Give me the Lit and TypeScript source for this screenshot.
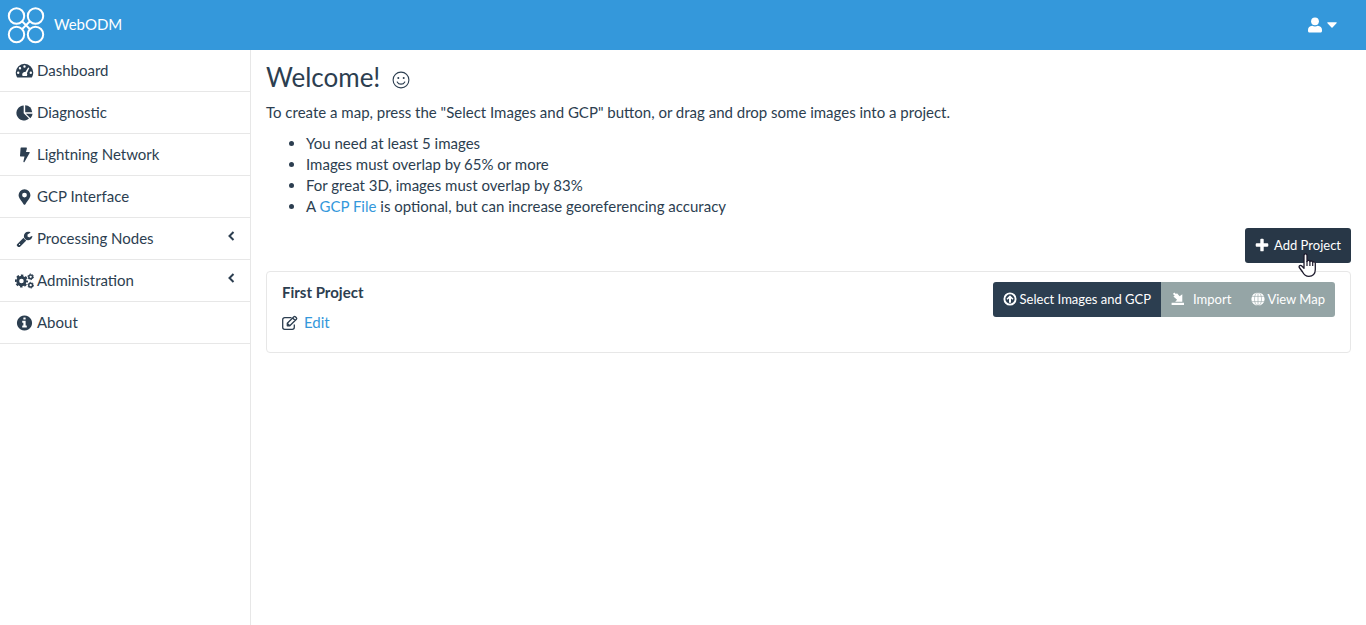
import { LitElement, html, svg, css, nothing } from "lit";
import { customElement, property } from "lit/decorators.js";

const icons: Record<string, { box: string; art: unknown }> = {
  dashboard: {
    box: "0 0 18 16",
    art: svg`<path fill-rule="evenodd" d="M9 .8a8.800 8.800 0 0 0-8.800 8.800c0 1.600.400 3.100 1.200 4.400.200.400.600.600 1 .600h13.200c.400 0 .800-.200 1-.600.800-1.300 1.200-2.800 1.200-4.400A8.800 8.800 0 0 0 9 .8zM9 2.300a1.200 1.200 0 1 1 0 2.400 1.200 1.200 0 0 1 0-2.400zM4.500 4.100a1.200 1.200 0 1 1 0 2.400 1.200 1.200 0 0 1 0-2.400zM2.700 8.500a1.200 1.200 0 1 1 0 2.400 1.200 1.200 0 0 1 0-2.400zM15.300 8.500a1.200 1.200 0 1 1 0 2.400 1.200 1.200 0 0 1 0-2.400zM12.700 4.400l1.100.700-2.400 5.100c.6 1.100.4 2-.1 2.800H7.100c-.8-1.300-.5-3.400 1.600-3.900.4-.1.800-.1 1.200 0z"/>`,
  },
  pie: {
    box: "0 0 17 16",
    art: svg`<path d="M7.700.5v7.700l5.300 5.300A7.500 7.500 0 1 1 7.700.5z"/><path d="M9.200.2a7.200 7.200 0 0 1 7 7H9.200z"/><path d="M9.900 8.700h6.700a7.300 7.300 0 0 1-2.200 4.500z"/>`,
  },
  bolt: {
    box: "0 0 16 16",
    art: svg`<path d="M4.600.6h5.200c.4 0 .7.400.6.800L9.500 5h3c.6 0 .9.600.6 1L8 15c-.4.600-1.300.3-1.100-.5l1.100-5H4.200c-.5 0-.8-.4-.7-.8l.6-7.600c0-.3.200-.5.500-.5z"/>`,
  },
  marker: {
    box: "0 0 16 16",
    art: svg`<path fill-rule="evenodd" d="M8 .2a5.900 5.900 0 0 0-5.900 5.900c0 2.300.8 3 5 9.200.4.700 1.400.7 1.800 0 4.200-6.200 5-6.900 5-9.200A5.900 5.900 0 0 0 8 .2zM8 3.700a2.400 2.400 0 1 1 0 4.800 2.400 2.400 0 0 1 0-4.800z"/>`,
  },
  wrench: {
    box: "60 60 1680 1680",
    art: svg`<path d="M448 1472q0-26-19-45t-45-19-45 19-19 45 19 45 45 19 45-19 19-45zm644-420l-682 682q-37 37-90 37-52 0-91-37l-106-108q-38-36-38-90 0-53 38-91l681-681q39 98 114.500 173.500t173.500 114.500zm634-435q0 39-23 106-47 134-164.500 217.500t-258.500 83.500q-185 0-316.500-131.500t-131.500-316.500 131.500-316.500 316.500-131.500q58 0 121.500 16.500t107.500 46.500q16 11 16 28t-16 28l-293 169v224l193 107q5-3 79-48.500t135.500-81 70.500-35.500q15 0 23.500 10t8.500 25z"/>`,
  },
  cogs: {
    box: "0 0 20 16",
    art: svg`<g fill="none" stroke="currentColor"><circle cx="6.800" cy="8" r="3.900" stroke-width="3"/><circle cx="6.800" cy="8" r="5.900" stroke-width="2" stroke-dasharray="2.600 2.030" stroke-dashoffset="1.300"/><circle cx="16.500" cy="3.600" r="2" stroke-width="1.600"/><circle cx="16.500" cy="3.600" r="3" stroke-width="1" stroke-dasharray="1.500 1.640"/><circle cx="16.500" cy="12.400" r="2" stroke-width="1.600"/><circle cx="16.500" cy="12.400" r="3" stroke-width="1" stroke-dasharray="1.500 1.640"/></g>`,
  },
  info: {
    box: "0 0 1792 1792",
    art: svg`<path d="M1152 1376v-160q0-14-9-23t-23-9h-96v-512q0-14-9-23t-23-9h-320q-14 0-23 9t-9 23v160q0 14 9 23t23 9h96v320h-96q-14 0-23 9t-9 23v160q0 14 9 23t23 9h448q14 0 23-9t9-23zm-128-896v-160q0-14-9-23t-23-9h-192q-14 0-23 9t-9 23v160q0 14 9 23t23 9h192q14 0 23-9t9-23zm720 416q0 230-114 424t-308 308-426 116-426-116-308-308-114-424 114-424 308-308 426-116 426 116 308 308 114 424z"/>`,
  },
  chevron: {
    box: "0 0 8 10",
    art: svg`<path d="M6.500 1L2.500 5l4 4" fill="none" stroke="currentColor" stroke-width="2"/>`,
  },
  user: {
    box: "0 0 14 16",
    art: svg`<circle cx="7" cy="4.300" r="3.900"/><path d="M4.200 8.800c1.700 1 3.900 1 5.600 0 2.600.2 4.200 1.700 4.200 4.100v1c0 .9-.6 1.500-1.500 1.500h-11C.6 15.400 0 14.800 0 13.900v-1c0-2.400 1.600-3.900 4.200-4.100z"/>`,
  },
  caret: {
    box: "0 0 10 6",
    art: svg`<path d="M.9.300h8.200c.6 0 .8.600.4 1L5.500 5.400a.7.700 0 0 1-1 0L.5 1.300C.1.900.3.300.9.300z"/>`,
  },
  smile: {
    box: "0 0 18 18",
    art: svg`<g fill="none" stroke="currentColor" stroke-width="1.100"><circle cx="9" cy="9" r="7.900"/><path d="M5.200 10.900c1.500 3 6.100 3 7.600 0" stroke-linecap="round"/></g><circle cx="6.300" cy="6.900" r="1"/><circle cx="11.700" cy="6.900" r="1"/>`,
  },
  plus: {
    box: "0 0 14 14",
    art: svg`<path d="M5.300 1.600c0-.5.400-.9.900-.9h1.600c.5 0 .9.400.9.900v3.700h3.700c.5 0 .9.400.9.900v1.600c0 .5-.4.900-.9.900H8.700v3.700c0 .5-.4.900-.9.900H6.200c-.5 0-.9-.4-.9-.9V8.700H1.600c-.5 0-.9-.4-.9-.9V6.200c0-.5.400-.9.900-.9h3.700z"/>`,
  },
  upload: {
    box: "0 0 14 14",
    art: svg`<circle cx="7" cy="7" r="5.600" fill="none" stroke="currentColor" stroke-width="1.900"/><path d="M7 3.200l3.500 3.600-1 1L8 6.600v4.200H6V6.600L4.500 7.800l-1-1z"/>`,
  },
  import: {
    box: "0 0 14 14",
    art: svg`<path d="M.6 10.800h12.400v2.200H.600z"/><path d="M3.200.6l1.800 1.500 1-.9 2.600 3 2.700-2v7.500H4.200l1.900-2L2.400 4.600l1.300-1.100L1.900 2z"/>`,
  },
  globe: {
    box: "0 0 14 14",
    art: svg`<circle cx="7" cy="7" r="6.600"/><g fill="none" stroke="#95a5a6" stroke-width=".600"><path d="M7 0v14M1 4.400h12M1 9.600h12"/><ellipse cx="7" cy="7" rx="3.500" ry="6.800"/></g>`,
  },
  edit: {
    box: "0 0 16 16",
    art: svg`<g fill="none" stroke="currentColor" stroke-width="1.300" stroke-linejoin="round"><path d="M9.500 2.700H2.700A2 2 0 0 0 .7 4.700v7.600a2 2 0 0 0 2 2h7.600a2 2 0 0 0 2-2V9.500"/><path d="M5.300 10.800V8.300l6.600-6.600a1 1 0 0 1 1.400 0l1.100 1.100a1 1 0 0 1 0 1.400l-6.600 6.600zM10.700 3l2.500 2.500M5.500 8.500l2.200 2.200"/></g>`,
  },
};

@customElement("ui-icon")
class UiIcon extends LitElement {
  @property() name = "";
  static styles = css`
    :host { display: inline-flex; flex: none; width: 16px; height: 16px; }
    svg { display: block; width: 100%; height: 100%; fill: currentColor; }
  `;
  render() {
    const icon = icons[this.name];
    return icon
      ? html`<svg viewBox=${icon.box} aria-hidden="true">${icon.art}</svg>`
      : nothing;
  }
}

const menu = [
  { icon: "dashboard", label: "Dashboard" },
  { icon: "pie", label: "Diagnostic" },
  { icon: "bolt", label: "Lightning Network" },
  { icon: "marker", label: "GCP Interface" },
  { icon: "wrench", label: "Processing Nodes", nested: true },
  { icon: "cogs", label: "Administration", nested: true },
  { icon: "info", label: "About" },
];

@customElement("app-root")
class AppRoot extends LitElement {
  static styles = css`
    :host {
      display: flex;
      flex-direction: column;
      min-height: 100vh;
      background: #fff;
      color: #2c3e50;
      font: 15px/21px Lato, "Liberation Sans", sans-serif;
    }
    * { box-sizing: border-box; }
    a { color: #3498db; text-decoration: none; }
    button { font: inherit; border: 0; margin: 0; color: #fff; cursor: pointer; }
    .topbar {
      display: flex;
      align-items: center;
      justify-content: space-between;
      height: 50px;
      padding: 0 29px 0 7px;
      background: #3498db;
      color: #fff;
    }
    .brand { display: flex; align-items: center; gap: 9px; padding-bottom: 1px; color: #fff; }
    .logo { width: 38px; height: 37px; margin-top: 2px; fill: none; stroke: #fff; stroke-width: 2; }
    .account { display: flex; align-items: center; gap: 5px; padding: 0; background: none; }
    .user { width: 14px; height: 16px; }
    .caret { width: 10px; height: 6px; }
    .body { display: flex; flex: 1; }
    .sidebar { flex: none; width: 251px; border-right: 1px solid #e7e7e7; }
    .menu { list-style: none; margin: 0; padding: 0; }
    .entry { border-bottom: 1px solid #e7e7e7; }
    .item { display: flex; align-items: center; gap: 3px; padding: 10px 15px; color: #2c3e50; }
    .glyph { width: 19px; height: 16px; }
    .arrow { width: 8px; height: 10px; margin: 0 0 6px auto; }
    .main { flex: 1; min-width: 0; padding: 13px 15px; }
    .title { display: flex; align-items: center; gap: 12px; margin: 0 0 10px; font-size: 26px; line-height: 29px; font-weight: 400; }
    .smile { width: 18px; height: 18px; margin-top: 5px; }
    .intro { margin: 0 0 10px; }
    .tips { margin: 0 0 11px; padding-left: 40px; }
    .actions { display: flex; justify-content: flex-end; margin-bottom: 8px; }
    .btn {
      display: flex;
      align-items: center;
      gap: 3px;
      height: 35px;
      padding: 0 10px 1px;
      background: #2c3e50;
      font-size: 13px;
      white-space: nowrap;
    }
    .add { position: relative; gap: 5px; background: #283747; border-radius: 3px; }
    .small { width: 14px; height: 14px; }
    .pointer { position: absolute; left: 53px; top: 25px; width: 20px; height: 25px; }
    .project {
      display: flex;
      justify-content: space-between;
      align-items: flex-start;
      padding: 10px 15px 19px;
      border: 1px solid #e7e7e7;
      border-radius: 4px;
    }
    .name { margin: 0 0 9px; font-size: 15px; line-height: 21px; font-weight: 700; }
    .edit { display: flex; align-items: center; gap: 6px; }
    .pencil { color: #2c3e50; }
    .group { display: flex; border-radius: 3px; overflow: hidden; }
    .muted { background: #95a5a6; }
    .import { gap: 8px; }
    .map { gap: 2px; }
  `;

  render() {
    return html`
      <header class="topbar">
        <a class="brand" href="#">
          <svg class="logo" viewBox="0 0 38 37" aria-hidden="true">
            <circle cx="9.500" cy="9" r="7.700" /><circle cx="28.500" cy="9" r="7.700" />
            <circle cx="9.500" cy="27.500" r="7.700" /><circle cx="28.500" cy="27.500" r="7.700" />
            <path d="M15 14.300l8 8M23 14.300l-8 8" />
          </svg>
          <span>WebODM</span>
        </a>
        <button class="account" aria-label="Account">
          <ui-icon class="user" name="user"></ui-icon>
          <ui-icon class="caret" name="caret"></ui-icon>
        </button>
      </header>
      <div class="body">
        <nav class="sidebar">
          <ul class="menu">
            ${menu.map(
              (m) => html`<li class="entry">
                <a class="item" href="#">
                  <ui-icon class="glyph" name=${m.icon}></ui-icon>
                  <span>${m.label}</span>
                  ${m.nested ? html`<ui-icon class="arrow" name="chevron"></ui-icon>` : nothing}
                </a>
              </li>`
            )}
          </ul>
        </nav>
        <main class="main">
          <h3 class="title">Welcome! <ui-icon class="smile" name="smile"></ui-icon></h3>
          <p class="intro">To create a map, press the "Select Images and GCP" button, or drag and drop some images into a project.</p>
          <ul class="tips">
            <li>You need at least 5 images</li>
            <li>Images must overlap by 65% or more</li>
            <li>For great 3D, images must overlap by 83%</li>
            <li>A <a href="#">GCP File</a> is optional, but can increase georeferencing accuracy</li>
          </ul>
          <div class="actions">
            <button class="btn add">
              <ui-icon class="small" name="plus"></ui-icon>Add Project
              <svg class="pointer" viewBox="0 0 20 25" aria-hidden="true">
                <path fill="#fff" stroke="#1d1a2c" stroke-width="1.300" stroke-linejoin="round" d="M6 2.600c0-2.300 3-2.300 3 0v5.800c.3-1.500 2.800-1.400 2.900.3.500-1.200 2.700-.9 2.800.6.700-1 2.500-.6 2.600.9v6.300c0 4.300-2.500 6.800-6.400 6.800-3.500 0-5-1.600-6.300-4.300L1.300 14.500c-.8-1.700 1.300-2.700 2.500-1.500L6 15.200z"/>
                <path fill="none" stroke="#1d1a2c" stroke-width="1.200" d="M9 8v5M11.900 8.700V13M14.700 9.300V13"/>
              </svg>
            </button>
          </div>
          <section class="project">
            <div>
              <h4 class="name">First Project</h4>
              <a class="edit" href="#"><ui-icon class="pencil" name="edit"></ui-icon>Edit</a>
            </div>
            <div class="group">
              <button class="btn"><ui-icon class="small" name="upload"></ui-icon>Select Images and GCP</button>
              <button class="btn muted import"><ui-icon class="small" name="import"></ui-icon>Import</button>
              <button class="btn muted map"><ui-icon class="small" name="globe"></ui-icon>View Map</button>
            </div>
          </section>
        </main>
      </div>
    `;
  }
}
